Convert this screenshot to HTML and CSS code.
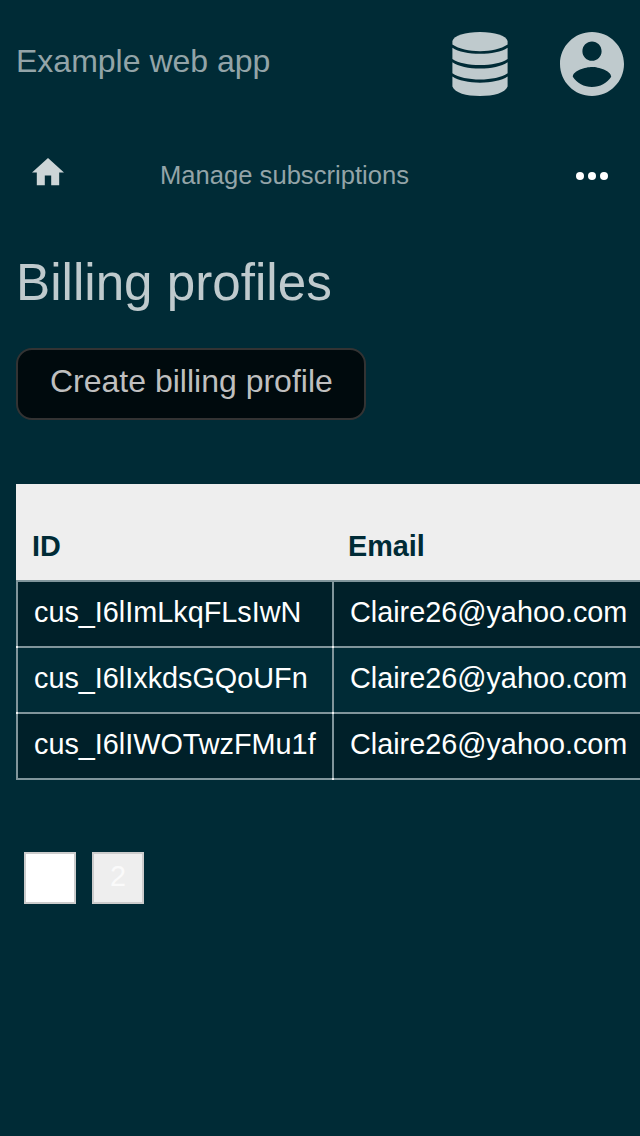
FILE: index.html
```html
<!DOCTYPE html>
<html lang="en">
<head>
<meta charset="utf-8">
<title>Billing profiles</title>
<link rel="stylesheet" href="styles.css">
</head>
<body>
<header class="topbar">
  <span class="brand">Example web app</span>
  <nav class="tools">
    <svg class="icon-db" viewBox="0 0 56 64"><path d="M.4 9C2 3.500 13 0 28 0s26 3.500 27.600 9v3.500C49 17 39 19.200 28 19.200S7 17 .4 12.500z"/><path d="M.4 15.700C12 23.700 44 23.700 55.600 15.700V27C44 35 12 35 .4 27z"/><path d="M.4 30.200C12 38.600 44 38.600 55.600 30.200V41.300C44 49.600 12 49.600 .4 41.300z"/><path d="M.4 44.600C12 52.700 44 52.700 55.600 44.600V54.500C53 61 42 64 28 64S3 61 .4 54.500z"/></svg>
    <svg class="icon-user" viewBox="2 2 20 20"><path d="M12 2C6.480 2 2 6.480 2 12s4.480 10 10 10 10-4.480 10-10S17.520 2 12 2zm0 3c1.660 0 3 1.340 3 3s-1.340 3-3 3-3-1.340-3-3 1.340-3 3-3zm0 14.200c-2.500 0-4.710-1.280-6-3.220.03-1.990 4-3.080 6-3.080 1.990 0 5.970 1.090 6 3.080-1.290 1.940-3.500 3.220-6 3.220z"/></svg>
  </nav>
</header>
<nav class="subnav">
  <svg class="icon-home" viewBox="2 3 20 17"><path d="M10 20v-6h4v6h5v-8h3L12 3 2 12h3v8z"/></svg>
  <span class="subtitle">Manage subscriptions</span>
  <svg class="icon-more" viewBox="0 0 32 8"><circle cx="4" cy="4" r="4"/><circle cx="16" cy="4" r="4"/><circle cx="28" cy="4" r="4"/></svg>
</nav>
<main class="content">
  <h1 class="heading">Billing profiles</h1>
  <button class="create">Create billing profile</button>
  <div class="table-wrap">
  <table class="profiles">
    <thead><tr><th class="col-id">ID</th><th class="col-email">Email</th></tr></thead>
    <tbody>
      <tr><td>cus_I6lImLkqFLsIwN</td><td>Claire26@yahoo.com</td></tr>
      <tr><td>cus_I6lIxkdsGQoUFn</td><td>Claire26@yahoo.com</td></tr>
      <tr><td>cus_I6lIWOTwzFMu1f</td><td>Claire26@yahoo.com</td></tr>
    </tbody>
  </table>
  </div>
  <div class="pages"><span class="page current">1</span><span class="page">2</span></div>
</main>
</body>
</html>
```
FILE: styles.css
```css
* { box-sizing: border-box; }
body { margin: 0; height: 1136px; overflow: hidden; background: #002b36; font-family: "Liberation Sans", Arial, sans-serif; }
.topbar { display: flex; justify-content: space-between; height: 128px; padding: 32px 16px; }
.brand { font-size: 32px; line-height: 58px; color: #93a4a8; }
.tools { display: flex; gap: 52px; fill: #bfcacd; }
.icon-db { width: 56px; height: 64px; }
.icon-user { width: 64px; height: 64px; }
.subnav { display: flex; align-items: center; height: 96px; padding: 0 32px; }
.icon-home { width: 32px; height: 27.2px; margin-bottom: 8px; fill: #ccd5d7; }
.subtitle { margin-left: 96px; margin-bottom: 2px; flex: 1; font-size: 25.6px; line-height: 32px; color: #93a4a8; }
.icon-more { width: 32px; height: 8px; fill: #fff; }
.content { padding: 27px 0 0 16px; }
.heading { margin: 0; font-size: 51.2px; font-weight: 400; line-height: 64px; color: #bfcacd; }
.create { display: block; width: 350px; height: 72px; margin-top: 33px; padding: 0 0 6px 32px; border: 2px solid #333; border-radius: 16px; background: #000a0d; color: #bfbfbf; font: 32px "Liberation Sans", Arial, sans-serif; text-align: left; }
.table-wrap { margin-top: 64px; overflow: hidden; }
.profiles { width: 624px; table-layout: fixed; border-spacing: 0; font-size: 28.8px; line-height: 32px; }
.col-id { width: 316px; }
th { height: 96px; padding: 28px 16px 0; background: #eee; color: #002b36; text-align: left; }
td { position: relative; height: 66px; padding: 14px 0 18px 16px; border-left: 2px solid #80959b; border-bottom: 2px solid #80959b; color: #fff; }
tbody tr:first-child td { height: 68px; border-top: 2px solid #80959b; }
tbody tr:nth-child(odd) td { background: #002029; }
td::after { content: ""; position: absolute; left: -2px; bottom: -2px; width: 2px; height: 2px; background: #eef0f1; }
tr:last-child td:first-child::after { background: #80959b; }
.pages { display: flex; gap: 16px; margin: 72px 8px 0; }
.page { width: 52px; height: 52px; border: 2px solid #ccc; background: #eee; color: #fafafa; font-size: 28.8px; line-height: 45px; text-align: center; }
.current { background: #fff; color: #fff; }
```
